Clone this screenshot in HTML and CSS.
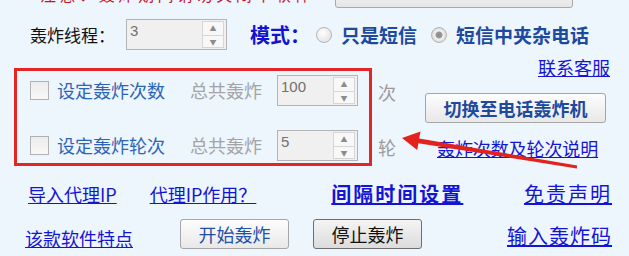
FILE: index.html
```html
<!DOCTYPE html>
<html lang="zh-CN">
<head>
	<title>轰炸机</title>
	<meta charset="UTF-8">
	<link rel="stylesheet" href="styles.css">
</head>
<body>
<div class="page">
	<div class="top">
		<span class="warn">注 意 ： 轰 炸 期 间 请 勿 关 闭 本 软 件</span>
		<span class="topBtn"></span>
	</div>

	<div class="threads">
		<span class="label">轰炸线程：</span>
		<div class="spin spinBig">
			<span class="val">3</span>
			<span class="arrows"><i>▲</i><i>▼</i></span>
		</div>
		<span class="mode">模式：</span>
		<span class="radio"></span>
		<span class="opt">只是短信</span>
		<span class="radio on"></span>
		<span class="opt">短信中夹杂电话</span>
	</div>

	<div class="mid">
		<div class="box">
			<div class="row">
				<span class="check"></span>
				<span class="setText">设定轰炸次数</span>
				<span class="total">总共轰炸</span>
				<div class="spin">
					<span class="val">100</span>
					<span class="arrows"><i>▲</i><i>▼</i></span>
				</div>
			</div>
			<div class="row">
				<span class="check"></span>
				<span class="setText">设定轰炸轮次</span>
				<span class="total">总共轰炸</span>
				<div class="spin">
					<span class="val">5</span>
					<span class="arrows"><i>▲</i><i>▼</i></span>
				</div>
			</div>
		</div>
		<div class="units">
			<span>次</span>
			<span>轮</span>
		</div>
		<div class="side">
			<a class="link contact" href="#">联系客服</a>
			<button class="btn switchBtn">切换至电话轰炸机</button>
			<a class="link explain" href="#">轰炸次数及轮次说明</a>
		</div>
	</div>

	<div class="links">
		<a class="link proxy" href="#">导入代理IP</a>
		<a class="link proxyUse" href="#">代理IP作用？</a>
		<a class="link big bold" href="#">间隔时间设置</a>
		<a class="link big right" href="#">免责声明</a>
	</div>

	<div class="actions">
		<a class="link feature" href="#">该款软件特点</a>
		<button class="btn startBtn">开始轰炸</button>
		<button class="btn stopBtn">停止轰炸</button>
		<a class="link big code" href="#">输入轰炸码</a>
	</div>

	<!-- red arrow drawn over the screenshot -->
	<svg class="arrow" width="629" height="256" viewBox="0 0 629 256">
		<polygon points="402,138 420.5,131.5 419.2,138.4 577.2,165.6 576.8,168.4 418.4,143.2 417.2,150" fill="#e4221d"/>
	</svg>
</div>
</body>
</html>
```

FILE: styles.css
```css
body {
	margin: 0;
	padding: 0;
	background: #edf5fd;
	font-family: "Noto Sans CJK SC", "Liberation Sans", sans-serif;
}
.page {
	position: relative;
	width: 629px;
	height: 256px;
	overflow: hidden;
}

/* cut-off strip at the top */
.top {
	display: flex;
	align-items: flex-end;
	height: 8px;
	overflow: hidden;
}
.warn {
	margin-left: 40px;
	margin-bottom: 6px;
	width: 254px;
	font-size: 16px;
	line-height: 16px;
	color: #c4162a;
	white-space: nowrap;
}
.topBtn {
	margin-left: 41px;
	width: 236px;
	height: 28px;
	border: 1px solid #a8a8a8;
	border-radius: 3px;
	background: linear-gradient(#ffffff, #e6e6e6);
}

/* threads + mode */
.threads {
	display: flex;
	align-items: center;
	margin-top: 11px;
	height: 31px;
}
.label {
	margin-left: 30px;
	width: 96px;
	font-size: 17px;
	color: #111;
}
.mode {
	margin-left: 23px;
	font-size: 20px;
	font-weight: bold;
	color: #1212d2;
}
.opt {
	font-size: 19px;
	font-weight: bold;
	color: #1d4a9e;
	margin-left: 9px;
}
.radio {
	width: 14px;
	height: 14px;
	margin-left: 6px;
	border: 1px solid #b4b4b4;
	border-radius: 50%;
	background: radial-gradient(circle at 40% 35%, #ffffff, #dcdcdc);
	box-sizing: content-box;
}
.opt + .radio {
	margin-left: 14px;
}
.radio.on {
	background: radial-gradient(circle, #8a8a8a 0, #9a9a9a 3px, #f4f4f4 4px, #dadada 7px);
}

/* number boxes */
.spin {
	display: flex;
	justify-content: space-between;
	box-sizing: border-box;
	width: 81px;
	height: 31px;
	border: 1px solid #b4b4b4;
	background: #f0f0f0;
}
.spinBig {
	width: 101px;
}
.val {
	padding: 2px 0 0 3px;
	font-family: "Liberation Sans", sans-serif;
	font-size: 15px;
	line-height: 18px;
	color: #707070;
}
.arrows {
	display: flex;
	flex-direction: column;
	width: 20px;
	margin: 1px 2px 1px 0;
	border: 1px solid #d6d6d6;
	background: #f8f8f8;
}
.arrows i {
	flex: 1;
	font-style: normal;
	font-size: 7px;
	line-height: 13px;
	text-align: center;
	color: #8c8c8c;
}
.arrows i + i {
	border-top: 1px solid #d6d6d6;
}

/* middle part with the red box */
.mid {
	display: flex;
	height: 116px;
}
.box {
	box-sizing: border-box;
	width: 358px;
	height: 98px;
	margin: 18px 0 0 14px;
	padding: 4px 0 0 13px;
	border: 3px solid #e42525;
	display: flex;
	flex-direction: column;
	gap: 25px;
}
.row {
	display: flex;
	align-items: center;
	height: 30px;
}
.check {
	box-sizing: border-box;
	width: 19px;
	height: 19px;
	border: 1px solid #b2b2b2;
	background: linear-gradient(#ececec, #f8f8f8);
}
.setText {
	margin-left: 8px;
	width: 108px;
	font-size: 18px;
	color: #2c64b6;
}
.total {
	margin-left: 25px;
	width: 87px;
	font-size: 18px;
	color: #a4a4a4;
}
.units {
	display: flex;
	flex-direction: column;
	gap: 35px;
	margin-left: 6px;
	padding-top: 32px;
	font-size: 18px;
	line-height: 20px;
	color: #9a9a9a;
}
.side {
	display: flex;
	flex-direction: column;
	margin-left: 29px;
	width: 185px;
}

.link {
	color: #1414d4;
	text-decoration: underline;
	font-size: 18px;
	line-height: 20px;
	white-space: nowrap;
}
.big {
	font-size: 20px;
	letter-spacing: 2px;
	line-height: 24px;
}
.bold {
	font-weight: bold;
}
.contact {
	align-self: flex-end;
	margin-top: 7px;
}
.explain {
	margin: 15px 0 0 12px;
	letter-spacing: -0.1px;
}

.btn {
	box-sizing: border-box;
	height: 30px;
	padding: 0;
	border: 1px solid #a6a6a6;
	border-radius: 3px;
	background: linear-gradient(#fdfdfd, #e8e8e8);
	font-family: "Noto Sans CJK SC", sans-serif;
	font-size: 18px;
	line-height: 26px;
}
.switchBtn {
	margin-top: 16px;
	width: 181px;
	font-weight: bold;
	color: #1d4a9e;
}

/* bottom two rows */
.links {
	display: flex;
	align-items: center;
	margin-top: 16px;
	height: 24px;
}
.proxy {
	margin-left: 28px;
}
.proxyUse {
	margin-left: 33px;
}
.links .bold {
	margin-left: 75px;
}
.right {
	margin-left: auto;
	margin-right: 17px;
}
.actions {
	display: flex;
	align-items: center;
	margin-top: 13px;
	height: 30px;
}
.feature {
	margin: 8px 0 0 25px;
}
.startBtn {
	margin-left: 47px;
	width: 109px;
	color: #2250a8;
}
.stopBtn {
	margin-left: 24px;
	width: 109px;
	border-color: #6e6e6e;
	background: linear-gradient(#f4f4f4, #dcdcdc);
	color: #111;
}
.code {
	margin: 4px 17px 0 auto;
	letter-spacing: 1px;
}

.arrow {
	position: absolute;
	left: 0;
	top: 0;
}
```
